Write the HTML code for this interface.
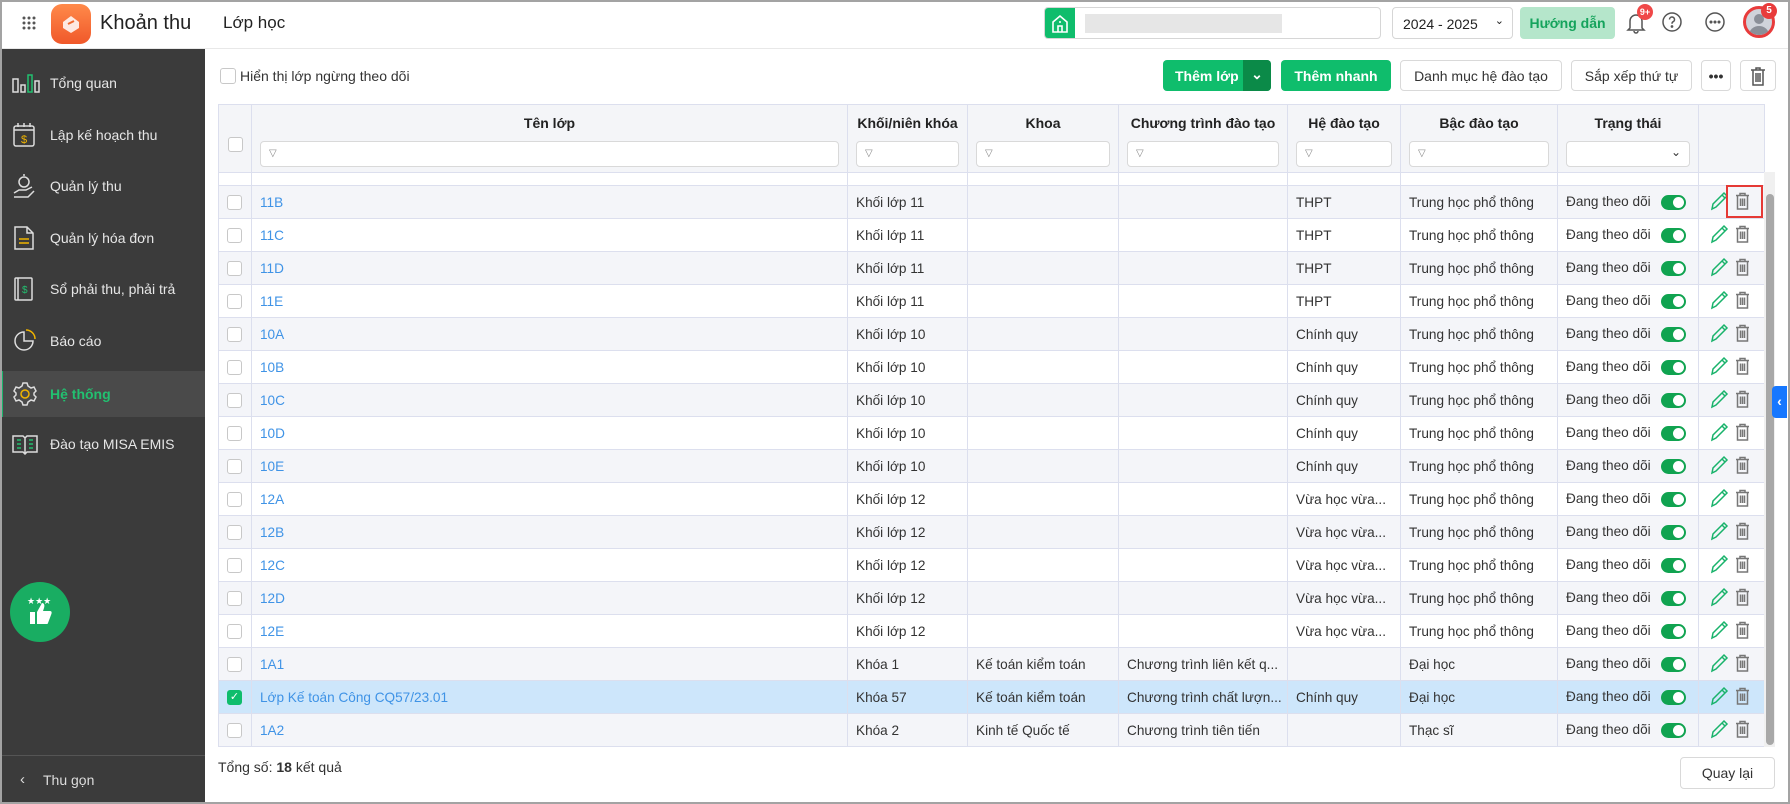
<!DOCTYPE html>
<html><head><meta charset="utf-8">
<style>
*{box-sizing:border-box;margin:0;padding:0}
body{width:1790px;height:804px;overflow:hidden;font-family:"Liberation Sans",Arial,sans-serif;background:#fff;position:relative;color:#222}
.frame{position:absolute;inset:0;border:2px solid #a3a3a3;pointer-events:none;z-index:50}
.top{position:absolute;left:0;top:0;width:1790px;height:49px;background:#fff;border-bottom:1px solid #e8e8e8}
.side{position:absolute;left:0;top:49px;width:205px;height:755px;background:#3b3b3b}
.nav{position:absolute;left:0;width:205px;height:50px;display:flex;align-items:center;color:#e6e6e6;font-size:14px}
.nav svg{position:absolute;left:12px}
.nav span{position:absolute;left:50px}
.nav.act{background:#4a4a4a;border-left:3px solid #19b36b;color:#22c070;font-weight:bold}
.abs{position:absolute}
.btn{position:absolute;height:31px;border-radius:4px;display:flex;align-items:center;justify-content:center;font-size:14px}
.gbtn{background:#0fbd6c;color:#fff;font-weight:bold}
.wbtn{background:#fff;border:1px solid #d9d9d9;color:#333}
table{position:absolute;left:218px;top:104px;width:1546px;border-collapse:collapse;table-layout:fixed;font-size:14px}
td,th{border:1px solid #dcdfee;height:33px;padding:0 8px;white-space:nowrap;overflow:hidden;color:#333}
td{font-size:13.6px}
th{height:68px;background:#f4f5f8;font-weight:bold;font-size:14px;vertical-align:top;padding-top:10px;color:#222}
th .f{margin-top:10px;height:26px;border:1px solid #d9d9d9;border-radius:4px;background:#fff;text-align:left;font-weight:normal;color:#888;font-size:10px;padding:6px 0 0 8px}
tr.g td{background:#f4f5f9}
tr.s td{background:#cde6fb}
td.l{color:#3f93e6}
.cb{display:inline-block;width:15px;height:15px;border:1px solid #c8c8c8;border-radius:3px;background:#fff;vertical-align:middle}
.tg{display:inline-block;width:25px;height:15px;background:#10a350;border-radius:8px;position:relative;vertical-align:middle;float:right;margin-top:1px;margin-right:4px}
.tg:after{content:"";position:absolute;right:2px;top:2px;width:11px;height:11px;border-radius:50%;background:#fff}
</style></head><body>
<div class="top">
 <svg class="abs" style="left:22px;top:16px" width="14" height="14" viewBox="0 0 14 14" fill="#555"><circle cx="2" cy="2" r="1.5"/><circle cx="7" cy="2" r="1.5"/><circle cx="12" cy="2" r="1.5"/><circle cx="2" cy="7" r="1.5"/><circle cx="7" cy="7" r="1.5"/><circle cx="12" cy="7" r="1.5"/><circle cx="2" cy="12" r="1.5"/><circle cx="7" cy="12" r="1.5"/><circle cx="12" cy="12" r="1.5"/></svg>
 <div class="abs" style="left:51px;top:4px;width:40px;height:40px;border-radius:11px;background:linear-gradient(#ff8a4a,#f0582a)"><svg width="40" height="40" viewBox="0 0 40 40"><path d="M12 18 L20 12 L28 18 L28 24 L20 29 L12 24Z" fill="#fff" opacity=".85"/><path d="M17 20 L23 17" stroke="#f06a30" stroke-width="2"/></svg></div>
 <div class="abs" style="left:100px;top:12px;font-size:20px;color:#222">Khoản thu</div>
 <div class="abs" style="left:223px;top:13px;font-size:17px;color:#222">Lớp học</div>
 <div class="abs" style="left:1044px;top:7px;width:337px;height:32px;border:1px solid #d6d6d6;border-radius:4px;overflow:hidden">
  <div class="abs" style="left:0;top:0;width:30px;height:32px;background:#0fbd6c"></div>
  <svg class="abs" style="left:6px;top:6px" width="18" height="19" viewBox="0 0 18 19" fill="none" stroke="#fff" stroke-width="1.6"><path d="M2 8 L9 2 L16 8 V18 H2Z M7 18 V12 H11 V18 M8 8 h2"/></svg>
  <div class="abs" style="left:40px;top:6px;width:197px;height:19px;background:#e6e6e6"></div>
 </div>
 <div class="abs" style="left:1392px;top:7px;width:121px;height:32px;border:1px solid #d6d6d6;border-radius:4px;font-size:14px;padding:8px 0 0 10px">2024 - 2025<span style="position:absolute;right:8px;top:6px;font-size:11px">&#8964;</span></div>
 <div class="btn" style="left:1520px;top:7px;width:95px;height:32px;background:#b5e6cb;color:#15a35c;font-weight:bold">Hướng dẫn</div>
 <svg class="abs" style="left:1626px;top:12px" width="20" height="22" viewBox="0 0 20 22" fill="none" stroke="#555" stroke-width="1.5"><path d="M4 16 V9 a6 6 0 0 1 12 0 V16 L18 18 H2Z M8 19 a2 2 0 0 0 4 0"/></svg>
 <div class="abs" style="left:1637px;top:4px;width:16px;height:16px;border-radius:8px;background:#f04848;color:#fff;font-size:9px;font-weight:bold;text-align:center;line-height:16px">9+</div>
 <svg class="abs" style="left:1661px;top:11px" width="22" height="22" viewBox="0 0 22 22" fill="none" stroke="#555" stroke-width="1.5"><circle cx="11" cy="11" r="9"/><path d="M8.5 8.5 a2.5 2.5 0 1 1 3.5 2.3 c-1 .5 -1 1 -1 2"/><circle cx="11" cy="15.5" r=".6" fill="#555"/></svg>
 <svg class="abs" style="left:1704px;top:11px" width="22" height="22" viewBox="0 0 22 22" fill="none" stroke="#555" stroke-width="1.5"><circle cx="11" cy="11" r="9"/><circle cx="7" cy="11" r=".8" fill="#555"/><circle cx="11" cy="11" r=".8" fill="#555"/><circle cx="15" cy="11" r=".8" fill="#555"/></svg>
 <div class="abs" style="left:1743px;top:6px;width:32px;height:32px;border-radius:50%;border:3px solid #e83b3b;background:#cfd3da;overflow:hidden"><svg width="26" height="26" viewBox="0 0 26 26" fill="#8a8f98"><circle cx="13" cy="10" r="5"/><path d="M3 26 a10 9 0 0 1 20 0Z"/></svg></div>
 <div class="abs" style="left:1761px;top:3px;width:16px;height:16px;border-radius:8px;background:#e83b3b;color:#fff;font-size:10px;font-weight:bold;text-align:center;line-height:16px">5</div>
</div>

<div class="side">
 <div class="nav" style="top:9px"><svg width="28" height="20" viewBox="0 0 28 20" fill="none" stroke="#ddd" stroke-width="1.5"><rect x="1" y="6" width="5" height="13"/><rect x="9" y="12" width="4" height="7"/><rect x="16" y="2" width="4" height="17" stroke="#22c070"/><rect x="23" y="8" width="4" height="11"/></svg><span>Tổng quan</span></div>
 <div class="nav" style="top:61px"><svg width="24" height="26" viewBox="0 0 24 26" fill="none" stroke="#ddd" stroke-width="1.5"><rect x="2" y="4" width="20" height="20" rx="2"/><path d="M2 8 H22 M6 1 V5 M12 1 V5 M18 1 V5"/><text x="9" y="21" font-size="11" fill="#f0b400" stroke="none">$</text></svg><span>Lập kế hoạch thu</span></div>
 <div class="nav" style="top:112px"><svg width="24" height="26" viewBox="0 0 24 26" fill="none" stroke="#ddd" stroke-width="1.5"><circle cx="12" cy="9" r="5"/><path d="M2 20 L7 17 H14 L20 14 M2 24 H16 L22 18"/><path d="M12 1 V3" /></svg><span>Quản lý thu</span></div>
 <div class="nav" style="top:164px"><svg width="24" height="26" viewBox="0 0 24 26" fill="none" stroke="#ddd" stroke-width="1.5"><path d="M3 2 H15 L21 8 V24 H3Z M15 2 V8 H21"/><path d="M7 14 H17 M7 18 H17" stroke="#f0b400"/></svg><span>Quản lý hóa đơn</span></div>
 <div class="nav" style="top:215px"><svg width="24" height="26" viewBox="0 0 24 26" fill="none" stroke="#ddd" stroke-width="1.5"><rect x="3" y="2" width="17" height="22" rx="1"/><path d="M6 2 V24"/><text x="10" y="17" font-size="10" fill="#22c070" stroke="none">$</text></svg><span>Sổ phải thu, phải trả</span></div>
 <div class="nav" style="top:267px"><svg width="24" height="24" viewBox="0 0 24 24" fill="none" stroke="#ddd" stroke-width="1.5"><path d="M12 3 A9 9 0 1 0 21 12 H12Z"/><path d="M14 1 A9 9 0 0 1 23 10" stroke="#f0b400"/></svg><span>Báo cáo</span></div>
 <div class="nav act" style="top:322px;height:46px"><svg width="26" height="26" viewBox="0 0 26 26" fill="none" stroke="#ddd" stroke-width="1.5" style="left:9px"><path d="M11 2 H15 L16 5 L19 7 L22 6 L24 10 L22 12 V14 L24 16 L22 20 L19 19 L16 21 L15 24 H11 L10 21 L7 19 L4 20 L2 16 L4 14 V12 L2 10 L4 6 L7 7 L10 5Z"/><circle cx="13" cy="13" r="4" stroke="#f0b400"/></svg><span style="left:47px">Hệ thống</span></div>
 <div class="nav" style="top:370px"><svg width="26" height="22" viewBox="0 0 26 22" fill="none" stroke="#ddd" stroke-width="1.5"><path d="M1 3 H11 L13 5 L15 3 H25 V19 H15 L13 21 L11 19 H1Z M13 5 V21"/><path d="M5 7 H9 M5 11 H9 M5 15 H9 M17 7 H21 M17 11 H21 M17 15 H21" stroke="#22c070"/></svg><span>Đào tạo MISA EMIS</span></div>
 <div class="abs" style="left:10px;top:533px;width:60px;height:60px;border-radius:50%;background:#19ad62"><svg width="60" height="60" viewBox="0 0 60 60" fill="#fff"><path d="M20 30 H25 V42 H20Z M27 30 L32 21 C34 21 35 23 34 26 L33 29 H40 C42 29 42 31 41 33 L38 41 C38 42 37 42 36 42 H27Z"/><text x="17" y="22" font-size="9">★★★</text></svg></div>
 <div class="abs" style="left:0;top:706px;width:205px;height:1px;background:#555"></div>
 <div class="abs" style="left:20px;top:722px;color:#ddd;font-size:15px">&#8249;</div>
 <div class="abs" style="left:43px;top:723px;color:#ddd;font-size:14px">Thu gọn</div>
</div>

<span class="cb abs" style="left:220px;top:68px;width:16px;height:16px"></span>
<div class="abs" style="left:240px;top:68px;font-size:14px;color:#333">Hiển thị lớp ngừng theo dõi</div>
<div class="btn gbtn" style="left:1163px;top:60px;width:108px;justify-content:flex-start;padding-left:12px;overflow:hidden">Thêm lớp<div class="abs" style="right:0;top:0;width:28px;height:31px;background:#0b8a48;text-align:center;line-height:29px">&#8964;</div></div>
<div class="btn gbtn" style="left:1281px;top:60px;width:110px">Thêm nhanh</div>
<div class="btn wbtn" style="left:1400px;top:60px;width:162px">Danh mục hệ đào tạo</div>
<div class="btn wbtn" style="left:1571px;top:60px;width:121px">Sắp xếp thứ tự</div>
<div class="btn wbtn" style="left:1701px;top:60px;width:30px;font-weight:bold">•••</div>
<div class="btn wbtn" style="left:1740px;top:60px;width:36px"><svg width="16" height="20" viewBox="0 0 16 20" fill="none" stroke="#555" stroke-width="1.5"><path d="M1 4 H15 M6 4 V2 H10 V4 M3 4 V19 H13 V4 M6 7 V16 M8 7 V16 M10 7 V16"/></svg></div>

<table>
<colgroup><col style="width:33px"><col style="width:596px"><col style="width:120px"><col style="width:151px"><col style="width:169px"><col style="width:113px"><col style="width:157px"><col style="width:141px"><col style="width:66px"></colgroup>
<tr><th style="padding:30px 0 0 0"><span class="cb"></span></th><th>Tên lớp<div class="f">▽</div></th><th>Khối/niên khóa<div class="f">▽</div></th><th>Khoa<div class="f">▽</div></th><th>Chương trình đào tạo<div class="f">▽</div></th><th>Hệ đào tạo<div class="f">▽</div></th><th>Bậc đào tạo<div class="f">▽</div></th><th>Trạng thái<div class="f" style="text-align:right;padding-right:8px;font-size:12px;padding-top:3px;color:#333">&#8964;</div></th><th></th></tr>
<tr><td style="height:13px;padding:0"></td><td style="height:13px"></td><td></td><td></td><td></td><td></td><td></td><td></td><td></td></tr>
</table>
<div id="rows"></div>
<script>
var R=[["11B","Khối lớp 11","","","THPT","Trung học phổ thông"],["11C","Khối lớp 11","","","THPT","Trung học phổ thông"],["11D","Khối lớp 11","","","THPT","Trung học phổ thông"],["11E","Khối lớp 11","","","THPT","Trung học phổ thông"],["10A","Khối lớp 10","","","Chính quy","Trung học phổ thông"],["10B","Khối lớp 10","","","Chính quy","Trung học phổ thông"],["10C","Khối lớp 10","","","Chính quy","Trung học phổ thông"],["10D","Khối lớp 10","","","Chính quy","Trung học phổ thông"],["10E","Khối lớp 10","","","Chính quy","Trung học phổ thông"],["12A","Khối lớp 12","","","Vừa học vừa...","Trung học phổ thông"],["12B","Khối lớp 12","","","Vừa học vừa...","Trung học phổ thông"],["12C","Khối lớp 12","","","Vừa học vừa...","Trung học phổ thông"],["12D","Khối lớp 12","","","Vừa học vừa...","Trung học phổ thông"],["12E","Khối lớp 12","","","Vừa học vừa...","Trung học phổ thông"],["1A1","Khóa 1","Kế toán kiểm toán","Chương trình liên kết q...","","Đại học"],["Lớp Kế toán Công CQ57/23.01","Khóa 57","Kế toán kiểm toán","Chương trình chất lượn...","Chính quy","Đại học"],["1A2","Khóa 2","Kinh tế Quốc tế","Chương trình tiên tiến","","Thạc sĩ"]];
var pen='<svg width="20" height="20" viewBox="0 0 20 20" fill="none" stroke="#19b36b" stroke-width="1.5"><path d="M3 18 L4 13 L15 2 L18 5 L7 16Z M13 4 L16 7"/></svg>';
var tr='<svg width="15" height="18" viewBox="0 0 15 18" fill="none" stroke="#777" stroke-width="1.5"><path d="M1 3.5 H14 M5 3.5 V1.5 H10 V3.5 M2.5 3.5 V17 H12.5 V3.5 M5.5 6.5 V14 M7.5 6.5 V14 M9.5 6.5 V14"/></svg>';
var h='<table style="top:185px"><colgroup><col style="width:33px"><col style="width:596px"><col style="width:120px"><col style="width:151px"><col style="width:169px"><col style="width:113px"><col style="width:157px"><col style="width:141px"><col style="width:66px"></colgroup>';
R.forEach(function(r,i){var c=i==15?'s':(i%2==0?'g':'');
h+='<tr class="'+c+'"><td style="padding:0 0 0 8px">'+(i==15?'<span class="cb" style="background:#0fbd6c;border-color:#0fbd6c;color:#fff;font-size:11px;text-align:center;line-height:13px">✓</span>':'<span class="cb"></span>')+'</td><td class="l">'+r[0]+'</td><td>'+r[1]+'</td><td>'+r[2]+'</td><td style="padding-right:2px">'+r[3]+'</td><td>'+r[4]+'</td><td>'+r[5]+'</td><td>Đang theo dõi<span class="tg"></span></td><td style="padding:0 0 0 10px"><span style="display:inline-block;vertical-align:middle">'+pen+'</span><span style="display:inline-block;vertical-align:middle;margin-left:6px">'+tr+'</span></td></tr>';});
h+='</table>';document.getElementById('rows').innerHTML=h;
</script>
<div class="abs" style="left:1726px;top:185px;width:37px;height:33px;border:2px solid #e53935"></div>
<div class="abs" style="left:1764px;top:172px;width:11px;height:575px;background:#f0f0f0"></div>
<div class="abs" style="left:1766px;top:194px;width:8px;height:551px;background:#a8a8a8;border-radius:4px"></div>
<div class="abs" style="left:1772px;top:386px;width:15px;height:32px;background:#1677ff;border-radius:4px 0 0 4px;color:#fff;font-size:14px;text-align:center;line-height:30px;font-weight:bold">‹</div>
<div class="abs" style="left:218px;top:759px;font-size:14px;color:#333">Tổng số: <b>18</b> kết quả</div>
<div class="btn wbtn" style="left:1680px;top:757px;width:95px;height:32px;font-size:14px">Quay lại</div>
<div class="frame"></div>
</body></html>
